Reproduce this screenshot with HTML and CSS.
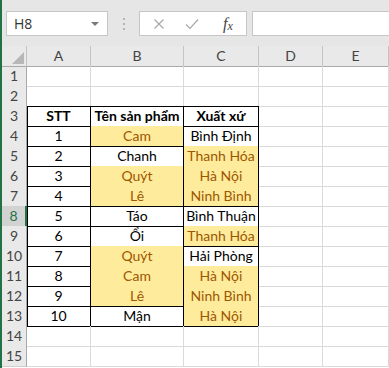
FILE: index.html
```html
<!DOCTYPE html>
<html lang="vi">
  <head>
    <meta charset="UTF-8" />
    <title>Sheet1</title>
    <link rel="stylesheet" href="styles.css">
  </head>
  <body>
    <div class="window">
      <!-- Formula bar -->
      <div class="toolbar">
        <div class="namebox">
          <span>H8</span>
          <span class="caret"></span>
        </div>
        <div class="grip"><i></i><i></i><i></i></div>
        <div class="fxbox">
          <svg class="ico" width="12" height="12" viewBox="0 0 12 12"><path d="M1.5 1.5 L10.5 10.5 M10.5 1.5 L1.5 10.5" stroke="#a8a8a8" stroke-width="1.2" fill="none"/></svg>
          <svg class="ico" width="14" height="12" viewBox="0 0 14 12"><path d="M1 6.5 L5 10.5 L13 1.5" stroke="#a8a8a8" stroke-width="1.2" fill="none"/></svg>
          <span class="fx">f<sub>x</sub></span>
        </div>
        <div class="formula"></div>
      </div>

      <!-- Grid -->
      <div class="sheet">
        <div class="row head">
          <div class="cell corner"><span class="tri"></span></div>
          <div class="cell">A</div>
          <div class="cell">B</div>
          <div class="cell">C</div>
          <div class="cell">D</div>
          <div class="cell">E</div>
        </div>
        <div class="row">
          <div class="cell rh">1</div>
          <div class="cell"></div><div class="cell"></div><div class="cell"></div><div class="cell"></div><div class="cell"></div>
        </div>
        <div class="row">
          <div class="cell rh">2</div>
          <div class="cell top"></div><div class="cell top"></div><div class="cell top"></div><div class="cell"></div><div class="cell"></div>
        </div>
        <div class="row">
          <div class="cell rh">3</div>
          <div class="cell t first bold">STT</div>
          <div class="cell t bold">Tên sản phẩm</div>
          <div class="cell t bold">Xuất xứ</div>
          <div class="cell"></div><div class="cell"></div>
        </div>
        <div class="row">
          <div class="cell rh">4</div>
          <div class="cell t first">1</div>
          <div class="cell t hl">Cam</div>
          <div class="cell t">Bình Định</div>
          <div class="cell"></div><div class="cell"></div>
        </div>
        <div class="row">
          <div class="cell rh">5</div>
          <div class="cell t first">2</div>
          <div class="cell t">Chanh</div>
          <div class="cell t hl">Thanh Hóa</div>
          <div class="cell"></div><div class="cell"></div>
        </div>
        <div class="row">
          <div class="cell rh">6</div>
          <div class="cell t first">3</div>
          <div class="cell t hl">Quýt</div>
          <div class="cell t hl">Hà Nội</div>
          <div class="cell"></div><div class="cell"></div>
        </div>
        <div class="row">
          <div class="cell rh">7</div>
          <div class="cell t first">4</div>
          <div class="cell t hl">Lê</div>
          <div class="cell t hl">Ninh Bình</div>
          <div class="cell"></div><div class="cell"></div>
        </div>
        <div class="row">
          <div class="cell rh selected">8</div>
          <div class="cell t first">5</div>
          <div class="cell t">Táo</div>
          <div class="cell t">Bình Thuận</div>
          <div class="cell"></div><div class="cell"></div>
        </div>
        <div class="row">
          <div class="cell rh">9</div>
          <div class="cell t first">6</div>
          <div class="cell t">Ổi</div>
          <div class="cell t hl">Thanh Hóa</div>
          <div class="cell"></div><div class="cell"></div>
        </div>
        <div class="row">
          <div class="cell rh">10</div>
          <div class="cell t first">7</div>
          <div class="cell t hl">Quýt</div>
          <div class="cell t">Hải Phòng</div>
          <div class="cell"></div><div class="cell"></div>
        </div>
        <div class="row">
          <div class="cell rh">11</div>
          <div class="cell t first">8</div>
          <div class="cell t hl">Cam</div>
          <div class="cell t hl">Hà Nội</div>
          <div class="cell"></div><div class="cell"></div>
        </div>
        <div class="row">
          <div class="cell rh">12</div>
          <div class="cell t first">9</div>
          <div class="cell t hl">Lê</div>
          <div class="cell t hl">Ninh Bình</div>
          <div class="cell"></div><div class="cell"></div>
        </div>
        <div class="row">
          <div class="cell rh">13</div>
          <div class="cell t first">10</div>
          <div class="cell t">Mận</div>
          <div class="cell t hl">Hà Nội</div>
          <div class="cell"></div><div class="cell"></div>
        </div>
        <div class="row">
          <div class="cell rh">14</div>
          <div class="cell"></div><div class="cell"></div><div class="cell"></div><div class="cell"></div><div class="cell"></div>
        </div>
        <div class="row">
          <div class="cell rh">15</div>
          <div class="cell"></div><div class="cell"></div><div class="cell"></div><div class="cell"></div><div class="cell"></div>
        </div>
      </div>
    </div>
  </body>
</html>
```

FILE: styles.css
```css
body {
  margin: 0;
  font-family: Lato, "Noto Sans", sans-serif;
  background: #fff;
}

.window {
  width: 389px;
  height: 368px;
  overflow: hidden;
  border-left: 2px solid #217346;
  box-sizing: border-box;
}

/* Formula bar */
.toolbar {
  height: 46px;
  background: #e6e6e6;
  display: flex;
  align-items: flex-start;
  padding: 11px 0 0 4px;
  box-sizing: border-box;
}

.namebox {
  width: 102px;
  height: 25px;
  box-sizing: border-box;
  background: #fff;
  border: 1px solid #c6c6c6;
  display: flex;
  align-items: center;
  justify-content: space-between;
  padding: 0 8px 0 7px;
  font-family: "Open Sans", sans-serif;
  font-size: 14px;
  color: #333;
}

.caret {
  width: 0;
  height: 0;
  border-left: 4px solid transparent;
  border-right: 4px solid transparent;
  border-top: 4px solid #7a7a7a;
}

.grip {
  width: 31px;
  height: 25px;
  display: flex;
  flex-direction: column;
  align-items: center;
  justify-content: center;
  gap: 3px;
}

.grip i {
  width: 2px;
  height: 2px;
  background: #b4b4b4;
}

.fxbox {
  width: 108px;
  height: 25px;
  box-sizing: border-box;
  background: #fff;
  border: 1px solid #c6c6c6;
  display: flex;
  align-items: center;
  padding-left: 13px;
}

.ico {
  display: block;
}

.fxbox .ico + .ico {
  margin-left: 20px;
}

.fx {
  margin-left: 24px;
  font-family: "Liberation Serif", serif;
  font-style: italic;
  font-size: 16px;
  color: #444;
  line-height: 1;
}

.fx sub {
  font-size: 12px;
  vertical-align: -1px;
}

.formula {
  flex: 1;
  height: 25px;
  margin-left: 5px;
  box-sizing: border-box;
  background: #fff;
  border: 1px solid #c6c6c6;
  border-right: none;
}

/* Grid */
.row {
  display: grid;
  grid-template-columns: 25px 64px 93px 75px 64px 1fr;
  height: 20px;
}

.cell {
  box-sizing: border-box;
  border-right: 1px solid #dadada;
  border-bottom: 1px solid #dadada;
  text-align: center;
  font-size: 14px;
  line-height: 20px;
  color: #000;
  white-space: nowrap;
}

.head .cell {
  background: #e9e9e9;
  color: #444;
  border-right-color: #c3c3c3;
  border-bottom-color: #a9a9a9;
}

.corner {
  position: relative;
}

.tri {
  position: absolute;
  right: 2px;
  bottom: 2px;
  width: 0;
  height: 0;
  border-left: 12px solid transparent;
  border-bottom: 12px solid #b7b7b7;
}

.rh {
  background: #e9e9e9;
  color: #444;
  border-right-color: #a9a9a9;
  border-bottom-color: #cfcfcf;
}

.rh.selected {
  background: #d2d2d2;
  color: #217346;
  border-right: 2px solid #217346;
}

.top {
  border-bottom-color: #000;
}

.t {
  border-right-color: #000;
  border-bottom-color: #000;
}

.t.first {
  box-shadow: inset 1px 0 0 #000;
}

.bold {
  font-weight: bold;
}

.hl {
  background: #ffeb9c;
  color: #9c5700;
}
```
